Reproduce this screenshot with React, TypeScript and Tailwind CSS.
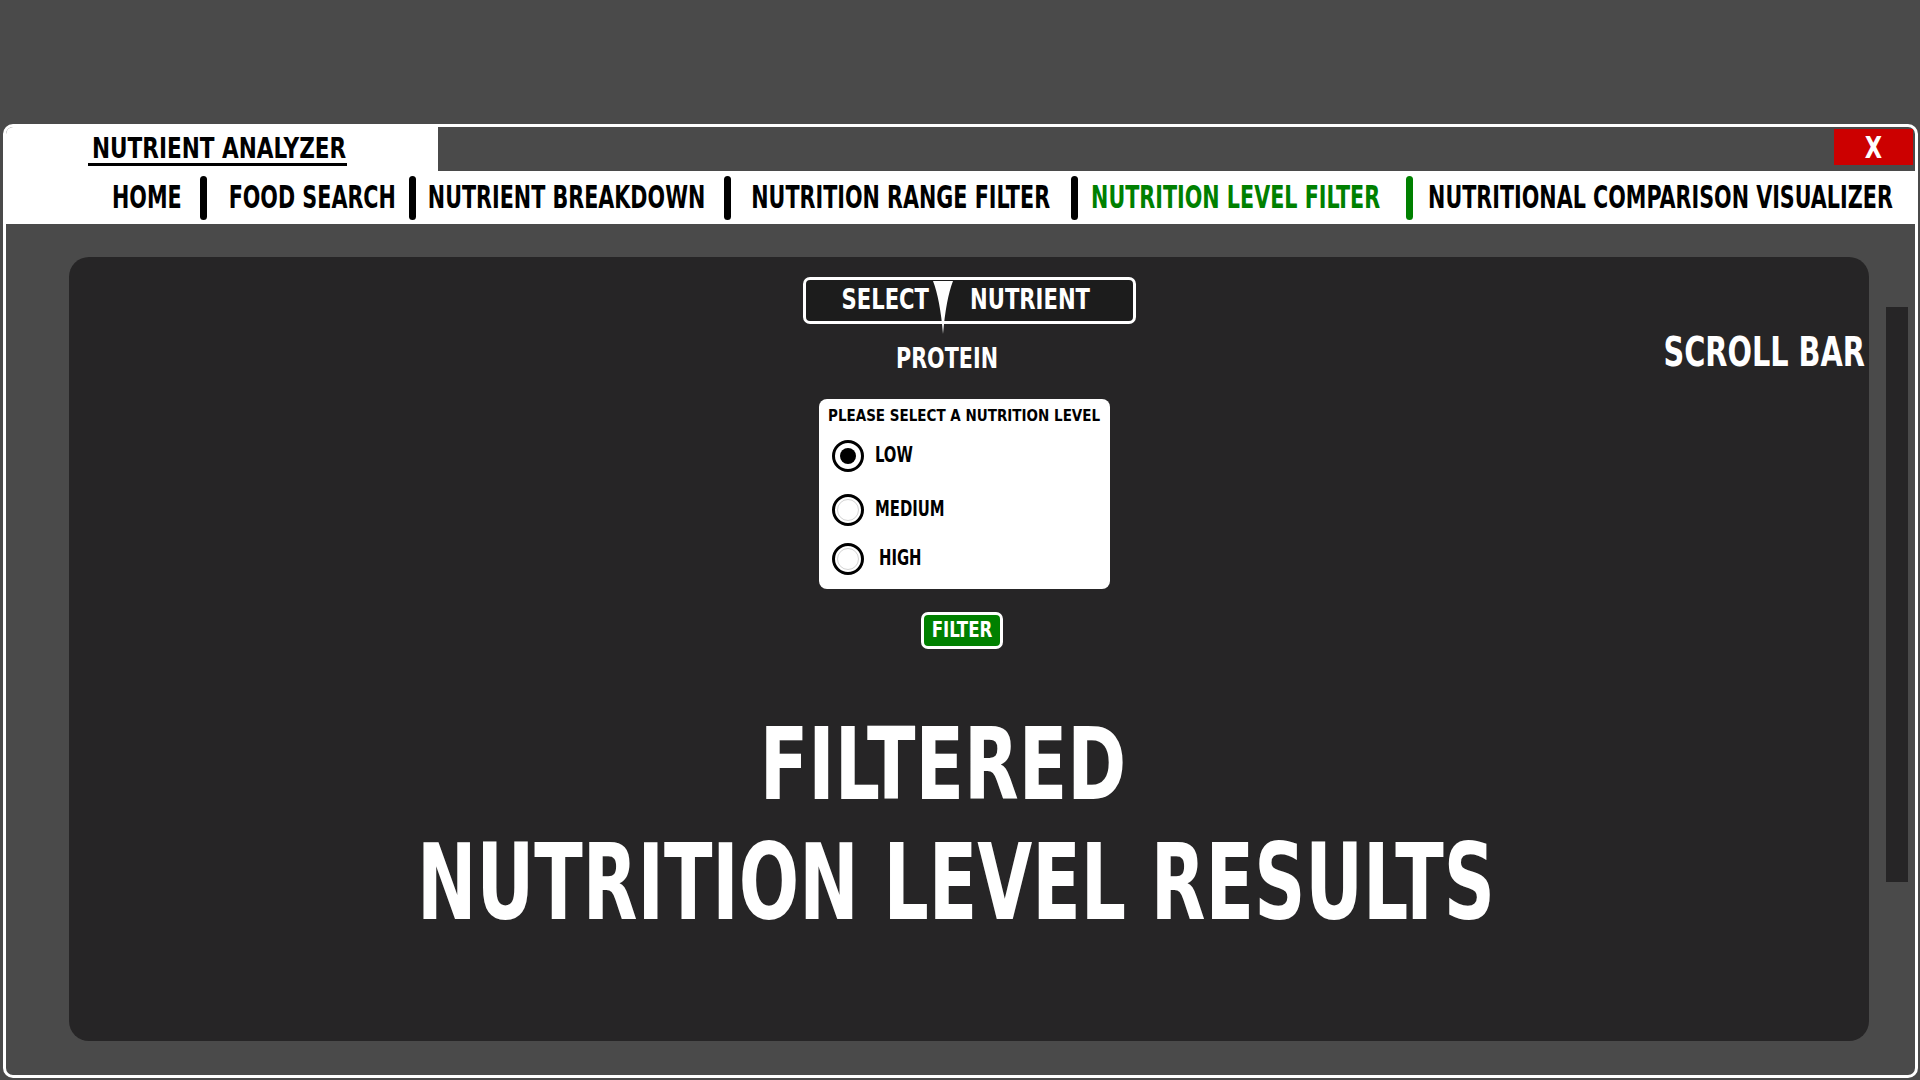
import React from "react";

const narrow = "font-['DejaVu_Sans_Condensed','DejaVu_Sans',sans-serif] font-bold";

// ml = space before the label, barMl = space between label and the bar after it
const navItems = [
  { label: "HOME", active: false, ml: "ml-0", barMl: "ml-[18px]" },
  { label: "FOOD SEARCH", active: false, ml: "ml-[22px]", barMl: "ml-[13px]" },
  { label: "NUTRIENT BREAKDOWN", active: false, ml: "ml-[12px]", barMl: "ml-[19px]" },
  { label: "NUTRITION RANGE FILTER", active: false, ml: "ml-[20px]", barMl: "ml-[21px]" },
  { label: "NUTRITION LEVEL FILTER", active: true, ml: "ml-[13px]", barMl: "ml-[26px]" },
  { label: "NUTRITIONAL COMPARISON VISUALIZER", active: false, ml: "ml-[15px]", barMl: "" },
];

const levels = [
  { label: "LOW", checked: true, mt: "mt-[16px]", pl: "" },
  { label: "MEDIUM", checked: false, mt: "mt-[22px]", pl: "" },
  { label: "HIGH", checked: false, mt: "mt-[17px]", pl: "pl-[4px]" },
];

function Radio({ checked }: { checked: boolean }) {
  return (
    <div className="w-[32px] h-[32px] rounded-full border-[3px] border-black bg-white flex items-center justify-center shrink-0">
      {checked ? (
        <div className="w-[16px] h-[16px] rounded-full bg-black" />
      ) : (
        <div className="w-[22px] h-[22px] rounded-full border border-[#d4d4d4]" />
      )}
    </div>
  );
}

export default function App() {
  return (
    <div className={`w-[1920px] h-[1080px] bg-[#4a4a4a] pt-[124px] pl-[3px] pr-[2px] pb-[2px] ${narrow}`}>
      <div className="h-full border-[3px] border-white rounded-[10px] flex flex-col overflow-hidden bg-[#4a4a4a]">
        {/* title row */}
        <div className="h-[44px] flex shrink-0">
          <div className="w-[432px] bg-white pl-[82px] pt-[7px]">
            <span className="inline-block pl-[4px] pr-[1px] border-b-[3px] border-black">
              <span className="inline-block text-[24px] leading-[28px] text-black scale-y-[1.2] whitespace-nowrap">
                NUTRIENT ANALYZER
              </span>
            </span>
          </div>
          <div className="flex-1" />
          <button className="w-[79px] h-[36px] mt-[2px] mr-[2px] bg-[#cc0000] text-white flex items-center justify-center">
            <span className="inline-block text-[25px] leading-none scale-y-[1.2]">X</span>
          </button>
        </div>

        {/* nav row */}
        <div className="h-[53px] bg-white flex items-center pl-[106px] shrink-0">
          {navItems.map((item, i) => (
            <React.Fragment key={item.label}>
              <span
                className={`inline-block shrink-0 text-[23px] leading-none whitespace-nowrap scale-y-[1.4] ${item.ml} ${
                  item.active ? "text-[#008000]" : "text-black"
                }`}
              >
                {item.label}
              </span>
              {i < navItems.length - 1 && (
                <div
                  className={`w-[7px] h-[44px] shrink-0 rounded-full ${item.barMl} ${
                    item.active ? "bg-[#008000]" : "bg-black"
                  }`}
                />
              )}
            </React.Fragment>
          ))}
        </div>

        {/* content */}
        <div className="flex-1 flex pt-[33px] pb-[34px] pl-[63px]">
          <div className="relative w-[1800px] h-full bg-[#262526] rounded-[20px] flex flex-col items-center text-white">
            <span className="absolute right-[4px] top-[77px] inline-block text-[32px] leading-[36px] scale-y-[1.27] whitespace-nowrap">
              SCROLL BAR
            </span>

            <div className="mt-[20px] w-[333px] h-[47px] border-[3px] border-white rounded-[7px] bg-[#1c1c1c] flex items-center pl-[36px]">
              <span className="inline-block text-[23.5px] leading-none scale-y-[1.17]">SELECT</span>
              <span className="relative w-[20px] h-full ml-[4px]">
                <svg className="absolute left-0 top-[1px]" width="20" height="53" viewBox="0 0 20 53">
                  <path d="M0 0 H20 Q13 18 10 53 Q7 18 0 0 Z" fill="white" />
                </svg>
              </span>
              <span className="inline-block text-[23.5px] leading-none scale-y-[1.17] ml-[17px]">NUTRIENT</span>
            </div>

            <span className="inline-block mt-[20px] mr-[44px] text-[23px] leading-[28px] scale-y-[1.25]">PROTEIN</span>

            <div className="mt-[27px] mr-[9px] w-[291px] h-[190px] bg-white rounded-[8px] text-black pt-[7px] pl-[9px] flex flex-col">
              <span className="inline-block origin-left text-[15px] leading-[18px] whitespace-nowrap scale-y-[1.1]">
                PLEASE SELECT A NUTRITION LEVEL
              </span>
              {levels.map((lvl) => (
                <div key={lvl.label} className={`h-[32px] flex items-center pl-[4px] ${lvl.mt}`}>
                  <Radio checked={lvl.checked} />
                  <span className={`inline-block ml-[11px] text-[16.5px] leading-none scale-y-[1.3] ${lvl.pl}`}>
                    {lvl.label}
                  </span>
                </div>
              ))}
            </div>

            <button className="mt-[23px] mr-[14px] w-[82px] h-[37px] bg-[#008000] border-[3px] border-white rounded-[7px] text-white flex items-center justify-center">
              <span className="inline-block text-[18.5px] leading-none scale-y-[1.18]">FILTER</span>
            </button>

            <div className="mt-[57px] flex flex-col items-center">
              <span className="inline-block mr-[52px] text-[79px] leading-[119px] scale-y-[1.27] whitespace-nowrap">
                FILTERED
              </span>
              <span className="inline-block mr-[26px] text-[79px] leading-[119px] scale-y-[1.32] whitespace-nowrap">
                NUTRITION LEVEL RESULTS
              </span>
            </div>
          </div>

          <div className="flex-1 pl-[17px]">
            <div className="w-[22px] h-[575px] mt-[50px] bg-[#262526]" />
          </div>
        </div>
      </div>
    </div>
  );
}
